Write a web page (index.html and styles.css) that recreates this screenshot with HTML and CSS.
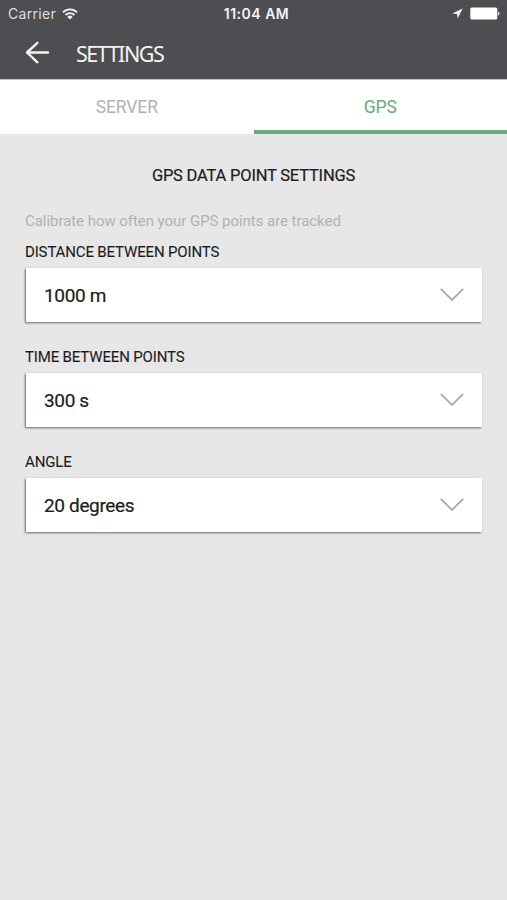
FILE: index.html
```html
<!DOCTYPE html>
<html lang="en">
<head>
  <meta charset="UTF-8">
  <meta name="viewport" content="width=device-width, initial-scale=1.0">
  <title>Settings</title>
  <link rel="stylesheet" href="styles.css">
</head>
<body>
  <div class="header">
    <div class="status">
      <div class="carrier">
        <span>Carrier</span>
        <svg class="wifi" width="16" height="12" viewBox="0 0 16 12" fill="none" stroke="#f4f4f5" stroke-width="1.8">
          <path d="M1 4.3a10 10 0 0 1 14 0"/>
          <path d="M3.5 7a6.4 6.4 0 0 1 9 0"/>
          <path d="M8 11.4L5.4 8.9a3.7 3.7 0 0 1 5.2 0z" fill="#f4f4f5" stroke="none"/>
        </svg>
      </div>
      <div class="time">11:04 AM</div>
      <div class="battery">
        <svg width="11" height="11" viewBox="0 0 11 11" fill="#f4f4f5">
          <path d="M10.6 0.4L0.2 5.4L5 6L5.6 10.6z"/>
        </svg>
        <svg width="31" height="13" viewBox="0 0 31 13" fill="#fff">
          <rect x="0.3" y="0.5" width="27" height="12" rx="1.6"/>
          <path d="M28.2 4.2q2.6 2.3 0 4.6z"/>
        </svg>
      </div>
    </div>
    <div class="navbar">
      <svg class="back" width="26" height="24" viewBox="0 0 26 24" fill="none" stroke="#f4f4f5" stroke-width="2.4" stroke-linecap="round" stroke-linejoin="round">
        <path d="M12.4 1.8L2 11.5L12.4 21.3M2 11.5H23"/>
      </svg>
      <h1 class="title">SETTINGS</h1>
    </div>
  </div>
  <div class="tabs">
    <div class="tab">SERVER</div>
    <div class="tab active">GPS</div>
  </div>
  <div class="content">
    <h2 class="heading">GPS DATA POINT SETTINGS</h2>
    <p class="hint">Calibrate how often your GPS points are tracked</p>
    <div class="field">
      <div class="label">DISTANCE BETWEEN POINTS</div>
      <div class="select">
        <span>1000 m</span>
        <svg class="arrow" width="24" height="14" viewBox="0 0 24 14"><path d="M0.8 0.8L12 12L23.2 0.8"/></svg>
      </div>
    </div>
    <div class="field">
      <div class="label">TIME BETWEEN POINTS</div>
      <div class="select">
        <span>300 s</span>
        <svg class="arrow" width="24" height="14" viewBox="0 0 24 14"><path d="M0.8 0.8L12 12L23.2 0.8"/></svg>
      </div>
    </div>
    <div class="field">
      <div class="label">ANGLE</div>
      <div class="select">
        <span>20 degrees</span>
        <svg class="arrow" width="24" height="14" viewBox="0 0 24 14"><path d="M0.8 0.8L12 12L23.2 0.8"/></svg>
      </div>
    </div>
  </div>
</body>
</html>
```
FILE: styles.css
```css
* {
  box-sizing: border-box;
  margin: 0;
  padding: 0;
}
body {
  min-height: 900px;
  font-family: Roboto, sans-serif;
  color: #1c1c1c;
  background-color: #e7e7e7;
}
svg {
  display: block;
}
.header {
  height: 79px;
  color: #f4f4f5;
  background-color: #4e4d52;
}
.status {
  display: grid;
  grid-template-columns: 1fr auto 1fr;
  align-items: center;
  height: 27px;
  padding: 0 6px 0 8px;
  font-family: Inter, sans-serif;
  font-size: 14px;
}
.carrier {
  display: flex;
  align-items: center;
  gap: 6px;
  letter-spacing: 0.3px;
  color: #dededf;
}
.time {
  padding-left: 4px;
  font-weight: 600;
  letter-spacing: 0.5px;
}
.battery {
  display: flex;
  justify-content: flex-end;
  align-items: center;
  gap: 7px;
}
.navbar {
  display: flex;
  align-items: center;
  height: 51px;
  padding-left: 25px;
}
.title {
  margin: 1px 0 0 25px;
  font-family: "Noto Sans", sans-serif;
  font-size: 21.5px;
  font-weight: 400;
  letter-spacing: -1.5px;
}
.tabs {
  display: flex;
  height: 55px;
  border-top: 1px solid #c4c4c6;
  background-color: #fff;
}
.tab {
  flex: 1;
  line-height: 54px;
  text-align: center;
  font-size: 17.5px;
  letter-spacing: -0.1px;
  color: #b2b2b2;
}
.tab.active {
  color: #66ac76;
  box-shadow: inset 0 -4px #66ac76;
}
.content {
  padding: 30px 25px 0;
}
.heading {
  line-height: 24px;
  text-align: center;
  font-size: 16.5px;
  font-weight: 400;
  letter-spacing: -0.2px;
  -webkit-text-stroke: 0.2px;
}
.hint {
  margin-top: 23px;
  line-height: 20px;
  font-size: 15px;
  letter-spacing: -0.05px;
  color: #b2b2b2;
}
.field {
  height: 105px;
  padding-top: 11px;
}
.label {
  height: 26px;
  line-height: 20px;
  font-size: 15px;
  letter-spacing: -0.15px;
  -webkit-text-stroke: 0.1px;
}
.select {
  display: flex;
  justify-content: space-between;
  align-items: center;
  height: 54px;
  margin-left: 1px;
  padding: 0 18px;
  font-size: 19px;
  letter-spacing: -0.35px;
  -webkit-text-stroke: 0.2px;
  background-color: #fff;
  box-shadow: -1px 1px 2px rgba(0, 0, 0, 0.55);
}
.arrow {
  fill: none;
  stroke: #aaa;
  stroke-width: 1.8;
}
```
